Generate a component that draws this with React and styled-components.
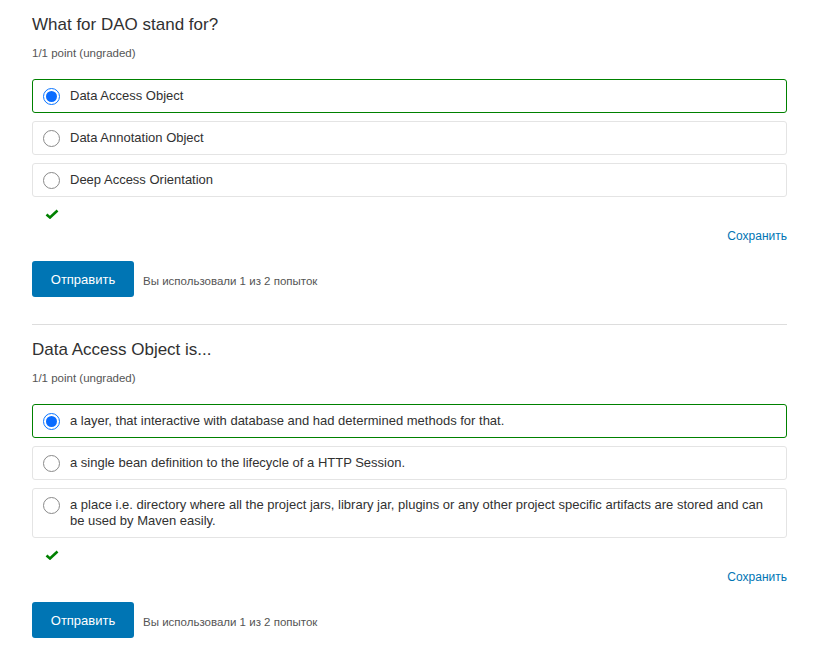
import React from "react";
import styled, { createGlobalStyle } from "styled-components";

const GlobalStyle = createGlobalStyle`
  body {
    margin: 0;
    background: #fff;
    font-family: "Liberation Sans", Arial, sans-serif;
    color: #313131;
  }
`;

const Page = styled.div`
  padding: 0 52px 0 32px;
`;

const Problem = styled.section`
  padding-top: 14px;
  padding-bottom: 27px;
  border-bottom: ${(p) => (p.last ? "none" : "1px solid #ddd")};
`;

const Title = styled.h3`
  margin: 0;
  font-size: 17px;
  line-height: 22px;
  font-weight: 400;
  color: #313131;
`;

const Points = styled.div`
  margin-top: 10px;
  font-size: 11.5px;
  line-height: 14px;
  color: #555;
`;

const Options = styled.div`
  margin-top: 19px;
  display: flex;
  flex-direction: column;
  gap: 8px;
`;

const Option = styled.label`
  display: flex;
  align-items: flex-start;
  gap: 10px;
  padding: 8px 10px;
  border: 1px solid ${(p) => (p.correct ? "#008100" : "#e4e4e4")};
  border-radius: 3px;
  font-size: 13px;
  line-height: 16px;
  color: #313131;
`;

const Radio = styled.span`
  flex: none;
  box-sizing: border-box;
  width: 17px;
  height: 17px;
  margin: -0.5px 0 -1px;
  border-radius: 50%;
  border: 1px solid ${(p) => (p.checked ? "#0a75ff" : "#8a8a8a")};
  display: flex;
  align-items: center;
  justify-content: center;
  &::after {
    content: "";
    display: ${(p) => (p.checked ? "block" : "none")};
    width: 11px;
    height: 11px;
    border-radius: 50%;
    background: #0a6cff;
  }
`;

const Status = styled.div`
  margin-top: 12px;
  padding-left: 13px;
  height: 10px;
  display: flex;
`;

const SaveRow = styled.div`
  display: flex;
  justify-content: flex-end;
  margin-top: 10px;
`;

const SaveLink = styled.a`
  font-size: 12px;
  line-height: 14px;
  color: #0075b4;
  text-decoration: none;
`;

const Actions = styled.div`
  display: flex;
  align-items: center;
  gap: 9px;
  margin-top: 18px;
`;

const SubmitButton = styled.button`
  width: 102px;
  height: 36px;
  border: none;
  border-radius: 3px;
  background: #0075b4;
  color: #fff;
  font-family: inherit;
  font-size: 13px;
  padding: 0;
`;

const Attempts = styled.span`
  font-size: 11.5px;
  color: #555;
  padding-top: 4px;
`;

const Check = () => (
  <svg width="14" height="10" viewBox="0 0 14 10">
    <path d="M1.5 5.5 L5 8.5 L12.5 1.5" fill="none" stroke="#008100" strokeWidth="2.6" />
  </svg>
);

const problems = [
  {
    title: "What for DAO stand for?",
    options: ["Data Access Object", "Data Annotation Object", "Deep Access Orientation"],
  },
  {
    title: "Data Access Object is...",
    options: [
      "a layer, that interactive with database and had determined methods for that.",
      "a single bean definition to the lifecycle of a HTTP Session.",
      "a place i.e. directory where all the project jars, library jar, plugins or any other project specific artifacts are stored and can be used by Maven easily.",
    ],
  },
];

export default function App() {
  return (
    <>
      <GlobalStyle />
      <Page>
        {problems.map((pr, i) => (
          <Problem key={i} last={i === problems.length - 1}>
            <Title>{pr.title}</Title>
            <Points>1/1 point (ungraded)</Points>
            <Options>
              {pr.options.map((o, j) => (
                <Option key={j} correct={j === 0}>
                  <Radio checked={j === 0} />
                  <span>{o}</span>
                </Option>
              ))}
            </Options>
            <Status>
              <Check />
            </Status>
            <SaveRow>
              <SaveLink href="#">Сохранить</SaveLink>
            </SaveRow>
            <Actions>
              <SubmitButton>Отправить</SubmitButton>
              <Attempts>Вы использовали 1 из 2 попыток</Attempts>
            </Actions>
          </Problem>
        ))}
      </Page>
    </>
  );
}
